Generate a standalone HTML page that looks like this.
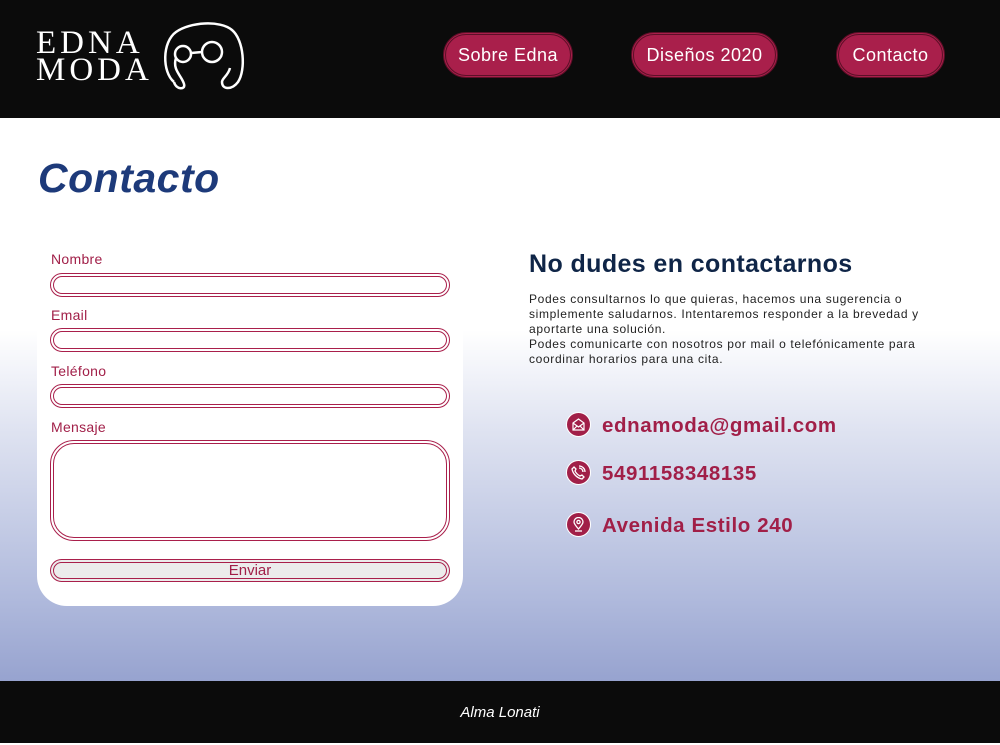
<!DOCTYPE html>
<html><head><meta charset="utf-8"><style>
*{margin:0;padding:0;box-sizing:border-box}
body{width:1000px;height:743px;overflow:hidden;font-family:"Liberation Sans",sans-serif;position:relative;background:linear-gradient(to bottom,#fff 0,#fff 330px,#dfe3f1 430px,#afb9dc 600px,#97a3cf 681px)}
header{position:absolute;left:0;top:0;width:1000px;height:118px;background:#0b0b0b}
.logo{position:absolute;left:36px;top:30px;color:#fff;font-family:"Liberation Serif",serif;font-size:33px;line-height:27px;letter-spacing:4px}
.nav{position:absolute;top:32px;height:46px;border-radius:23px;background:#a91f4b;border:3px double #5c0f27;color:#fff;font-size:18px;line-height:40px;text-align:center;letter-spacing:.5px}
h1{position:absolute;left:38px;top:155px;font-size:41px;font-style:italic;font-weight:bold;color:#1d3a7a;letter-spacing:.5px}
.card{position:absolute;left:37px;top:240px;width:426px;height:366px;background:#fff;border-radius:0 0 30px 30px}
label{position:absolute;left:51px;font-size:14px;color:#a11f48;letter-spacing:.3px}
.in{position:absolute;left:50px;width:400px;border:4px double #a91f4b;border-radius:12px;background:#fff}
.btn{position:absolute;left:50px;top:559px;width:400px;height:23px;border:4px double #a91f4b;border-radius:12px;background:#ececec;color:#a11f48;font-size:15px;text-align:center;line-height:15px}
h2{position:absolute;left:529px;top:250px;font-size:25px;color:#0f2547;letter-spacing:.4px}
.p{position:absolute;left:529px;top:292px;font-size:12px;line-height:15px;color:#222;width:415px;letter-spacing:.65px}
.ci{position:absolute;left:566px;font-size:20.5px;font-weight:bold;color:#a11f48;letter-spacing:.6px}
.ic{display:inline-block;width:25px;height:25px;border-radius:50%;background:#a11f48;vertical-align:middle;margin-right:11px;border:1px solid #fff;position:relative;top:-2px}
.ic svg{position:absolute;left:4px;top:4px}
footer{position:absolute;left:0;top:681px;width:1000px;height:62px;background:#0b0b0b;color:#fff;text-align:center;font-style:italic;font-size:15px;line-height:64px}
</style></head><body>
<header>
<div class="logo">EDNA<br>MODA</div>
<svg style="position:absolute;left:160px;top:20px" width="86" height="72" viewBox="0 0 86 72" fill="none" stroke="#fff" stroke-width="2.5">
<path d="M14 62 C2 52 2 22 16 12 C30 2 60 0 72 10 C84 20 86 50 78 62 C72 70 62 70 62 62 C62 58 68 56 70 48"/>
<circle cx="23" cy="34" r="8"/><circle cx="52" cy="32" r="10"/><path d="M31 33 L42 32"/>
<path d="M16 38 C12 50 22 56 24 64 C26 70 16 70 14 62"/>
</svg>
<div class="nav" style="left:443px;width:130px">Sobre Edna</div>
<div class="nav" style="left:631px;width:147px">Diseños 2020</div>
<div class="nav" style="left:836px;width:109px">Contacto</div>
</header>
<h1>Contacto</h1>
<div class="card"></div>
<label style="top:251px">Nombre</label>
<div class="in" style="top:273px;height:24px"></div>
<label style="top:307px">Email</label>
<div class="in" style="top:328px;height:24px"></div>
<label style="top:363px">Teléfono</label>
<div class="in" style="top:384px;height:24px"></div>
<label style="top:419px">Mensaje</label>
<div class="in" style="top:440px;height:101px;border-radius:24px"></div>
<div class="btn">Enviar</div>
<h2>No dudes en contactarnos</h2>
<div class="p">Podes consultarnos lo que quieras, hacemos una sugerencia o simplemente saludarnos. Intentaremos responder a la brevedad y aportarte una solución.<br>Podes comunicarte con nosotros por mail o telefónicamente para coordinar horarios para una cita.</div>
<div class="ci" style="top:414px"><span class="ic"><svg width="15" height="15" viewBox="0 0 15 15" fill="none" stroke="#fff" stroke-width="1.2"><path d="M2 6 L7.5 2 L13 6 V13 H2 Z M2 6 L7.5 10 L13 6 M2 13 L6 9 M13 13 L9 9"/></svg></span>ednamoda@gmail.com</div>
<div class="ci" style="top:462px"><span class="ic"><svg width="15" height="15" viewBox="0 0 15 15" fill="none" stroke="#fff" stroke-width="1.3"><path d="M3 2 L5 4 L4 6 C5 8 7 10 9 11 L11 10 L13 12 L11 14 C6 13 2 9 1 4 Z M8 3 A4 4 0 0 1 12 7 M8 1 A6 6 0 0 1 14 7"/></svg></span>5491158348135</div>
<div class="ci" style="top:514px"><span class="ic"><svg width="15" height="15" viewBox="0 0 15 15" fill="none" stroke="#fff" stroke-width="1.3"><path d="M7.5 12 C4 8 3 6 3 5 A4.5 4.5 0 0 1 12 5 C12 6 11 8 7.5 12 Z"/><circle cx="7.5" cy="5" r="1.6"/><path d="M4 14 H11"/></svg></span>Avenida Estilo 240</div>
<footer>Alma Lonati</footer>
</body></html>
